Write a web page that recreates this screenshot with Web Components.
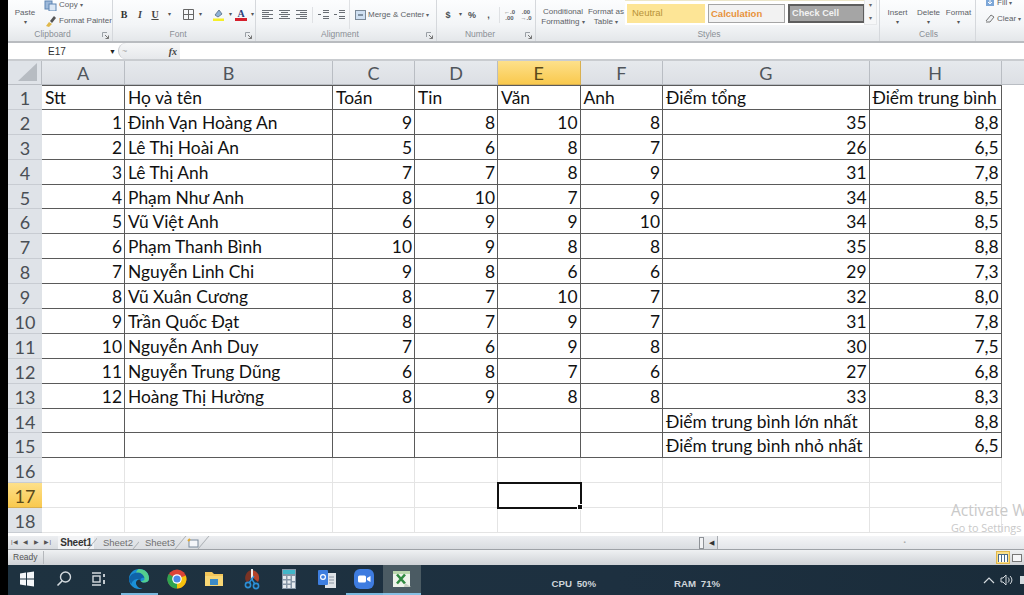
<!DOCTYPE html>
<html lang="vi">
<head>
<meta charset="utf-8">
<title>Excel</title>
<style>
  html, body { margin: 0; height: 595px; overflow: hidden; background: #000; }
  body { padding-left: 8px; box-sizing: border-box; width: 1024px; display: flex; flex-direction: column; font-family: "Liberation Sans", sans-serif; }
</style>
</head>
<body>
<xl-ribbon></xl-ribbon>
<xl-formula-bar></xl-formula-bar>
<xl-sheet></xl-sheet>
<xl-tabs></xl-tabs>
<xl-status></xl-status>
<xl-taskbar></xl-taskbar>
<script>
// small launcher mark that sits in the corner of a ribbon group
const launcher = `<svg width="7" height="7" viewBox="0 0 7 7"><path d="M0.5 0.5H5M0.5 0.5V5" stroke="#9aa0a6" fill="none"/><path d="M3 3L6.5 6.5M6.5 3.5V6.5H3.5" stroke="#777" fill="none"/></svg>`;

class RbGroup extends HTMLElement {
    constructor() {
        super();
        this.attachShadow({ mode: 'open' });
        const hasLaunch = this.hasAttribute('launch');
        const launch = hasLaunch ? `<span class="launch">${launcher}</span>` : '';
        this.shadowRoot.innerHTML = `
            <style>
                :host { display: flex; flex-direction: column; box-sizing: border-box; height: 41px; border-right: 1px solid #d5d8dc; overflow: hidden; flex: none; position: relative; }
                .body { height: 29px; display: flex; align-items: center; }
                .label { height: 12px; line-height: 11px; font-size: 8.5px; color: #8a8f96; text-align: center; padding-right: ${hasLaunch ? 15 : 0}px; }
                .launch { position: absolute; right: 3px; bottom: 2px; line-height: 0; }
            </style>
            <div class="body"><slot></slot></div>
            <div class="label">${this.getAttribute('label') || ''}${launch}</div>`;
    }
}
customElements.define('rb-group', RbGroup);

const lines = (rows) => `<svg width="11" height="9" viewBox="0 0 11 9">${rows.map((r, i) => `<path d="M${r[0]} ${i * 2 + 0.5}H${r[1]}" stroke="#6a6f75"/>`).join('')}</svg>`;

const ribbonTemplate = document.createElement('template');
ribbonTemplate.innerHTML = `
    <style>
        :host { display: flex; flex: none; height: 43px; box-sizing: border-box; border-bottom: 2px solid #b9bcc0; background: linear-gradient(#fcfdfe, #f3f5f7 60%, #e4e7ea); font-size: 8px; color: #5c6166; overflow: hidden; }
        .big { display: flex; flex-direction: column; align-items: center; text-align: center; line-height: 10px; color: #5c6166; white-space: nowrap; margin-top: 5px; flex: none; }
        .arrow { font-size: 6px; line-height: 9px; color: #555; }
        .small { display: flex; align-items: center; gap: 2px; height: 16px; white-space: nowrap; }
        .ic { display: flex; flex: none; align-items: center; justify-content: center; height: 16px; }
        .w16 { width: 16px; } .w14 { width: 14px; } .w8 { width: 8px; } .w17 { width: 17px; }
        .sp1 { width: 1px; flex: none; } .sp2 { width: 2px; flex: none; } .sp4 { width: 4px; flex: none; } .sp6 { width: 6px; flex: none; }
        .sep { width: 1px; height: 16px; background: #dfe1e4; flex: none; }
        .b { font: bold 10px "Liberation Serif", serif; color: #333; }
        .i { font: italic bold 10px "Liberation Serif", serif; color: #444; }
        .u { font: bold 10px "Liberation Serif", serif; color: #444; text-decoration: underline; }
        .num { font: bold 9px "Liberation Sans", sans-serif; color: #4a4f55; }
        .dec { flex-direction: column; font: bold 6px/6px "Liberation Sans", sans-serif; color: #5a6066; }
        .gallery { display: flex; gap: 3px; align-items: center; background: #fff; height: 25px; margin-top: -4px; padding: 0 2px; box-sizing: border-box; width: 239px; flex: none; border-top: 1px solid #ece6c8; }
        .st { width: 77px; height: 19px; flex: none; box-sizing: border-box; font-size: 9.5px; line-height: 17px; padding-left: 2px; white-space: nowrap; }
        .neutral { background: #fde596; color: #b8933a; padding-left: 5px; width: 78px; }
        .calc { background: #f2f2f2; border: 1px solid #a5a5a5; color: #e8923a; font-weight: bold; }
        .check { background: #a5a5a5; border: 2px solid #5e5e5e; color: #f2f2f2; font-weight: bold; line-height: 15px; font-size: 9.2px; }
        .gscroll { width: 13px; height: 25px; margin-top: -4px; flex: none; display: flex; flex-direction: column; justify-content: space-between; align-items: center; font-size: 6px; color: #666; line-height: 11px; border: 1px solid #e6e8ea; border-top: 0; box-sizing: border-box; background: #f6f7f8; }
    </style>
    <rb-group label="Clipboard" launch style="width:105px">
        <div class="big" style="width:34px">Paste<span class="arrow">▾</span></div>
        <div style="margin-top:-4px">
            <div class="small" style="margin-left:2px">
                <svg width="13" height="12" viewBox="0 0 13 12"><rect x="1" y="2" width="7" height="8" fill="#9db9da" stroke="#5f86b3"/><rect x="5" y="5" width="7" height="7" fill="#dbe7f4" stroke="#5f86b3"/></svg>Copy <span style="font-size:6px">▾</span>
            </div>
            <div class="small" style="margin-left:2px">
                <svg width="13" height="12" viewBox="0 0 13 12"><path d="M2 11L5 7L8 9L5 12Z" fill="#e0b84a"/><path d="M6 6L10 1L12 3L8 8Z" fill="#555"/></svg>Format Painter
            </div>
        </div>
    </rb-group>
    <rb-group label="Font" launch style="width:143px;padding-left:3px">
        <span class="ic w16 b">B</span><span class="ic w16 i">I</span><span class="ic w14 u">U</span><span class="ic w14 arrow">▾</span>
        <span class="sp4"></span>
        <span class="ic w16"><svg width="11" height="11" viewBox="0 0 11 11"><path d="M.5.5h10v10H.5zM5.5.5v10M.5 5.5h10" fill="none" stroke="#666"/></svg></span><span class="ic w8 arrow">▾</span>
        <span class="sp6"></span>
        <span class="ic w16"><svg width="13" height="13" viewBox="0 0 13 13"><path d="M3 7L7 2L10 6L6 9Z" fill="#8fb2d6" stroke="#6a7f96"/><path d="M1 10.5h11v2.5H1z" fill="#f5ef28"/></svg></span><span class="ic w8 arrow">▾</span>
        <span class="ic w14" style="flex-direction:column"><span class="b" style="line-height:9px;color:#2b3f7a">A</span><span style="width:12px;height:3px;background:#d5202c"></span></span><span class="ic w8 arrow">▾</span>
    </rb-group>
    <rb-group label="Alignment" launch style="width:181px;padding-left:3px">
        <span class="ic w17">${lines([[0, 11], [0, 7], [0, 11], [0, 7], [0, 11]])}</span><span class="ic w17">${lines([[0, 11], [2, 9], [0, 11], [2, 9], [0, 11]])}</span><span class="ic w17">${lines([[0, 11], [4, 11], [0, 11], [4, 11], [0, 11]])}</span>
        <span class="sp2"></span><span class="sep"></span><span class="sp2"></span>
        <span class="ic w16">${lines([[5, 11], [5, 11], [0, 3], [5, 11], [5, 11]])}</span><span class="ic w16">${lines([[5, 11], [5, 11], [0, 3], [5, 11], [5, 11]])}</span>
        <span class="sp2"></span><span class="sep" style="height:29px"></span>
        <span class="small" style="margin-left:5px"><svg width="11" height="10" viewBox="0 0 11 10"><rect x=".5" y=".5" width="10" height="9" fill="#cfe0f2" stroke="#7b8a99"/><path d="M3 5h5" stroke="#345"/></svg>Merge &amp; Center <span style="font-size:6px">▾</span></span>
    </rb-group>
    <rb-group label="Number" launch style="width:99px;padding-left:3px">
        <span class="ic w16 num">$</span><span class="ic w8 arrow">▾</span><span class="ic w16 num">%</span><span class="ic w17 num">,</span>
        <span class="sp2"></span><span class="sep"></span><span class="sp1"></span>
        <span class="ic w17 dec"><span>←.0</span><span>.00</span></span><span class="ic w16 dec"><span>.00</span><span>→.0</span></span>
    </rb-group>
    <rb-group label="Styles" style="width:344px;padding-left:3px">
        <div class="big" style="width:48px">Conditional<span>Formatting <span style="font-size:6px">▾</span></span></div>
        <div class="big" style="width:38px">Format as<span>Table <span style="font-size:6px">▾</span></span></div>
        <div class="gallery">
            <div class="st neutral">Neutral</div>
            <div class="st calc">Calculation</div>
            <div class="st check">Check Cell</div>
        </div>
        <div class="gscroll"><span>▾</span><span>▾</span></div>
    </rb-group>
    <rb-group label="Cells" style="width:96px;padding-left:2px">
        <div class="big" style="width:31px">Insert<span class="arrow">▾</span></div>
        <div class="big" style="width:31px">Delete<span class="arrow">▾</span></div>
        <div class="big" style="width:29px">Format<span class="arrow">▾</span></div>
    </rb-group>
    <rb-group style="width:48px;padding-left:9px;border:0">
        <div style="margin-top:-9px">
            <div class="small"><svg width="10" height="10" viewBox="0 0 10 10"><rect x="1" y="1" width="8" height="8" fill="#7da7d8"/><path d="M5 2v5M3 5l2 2 2-2" stroke="#fff" fill="none"/></svg>Fill <span style="font-size:6px">▾</span></div>
            <div class="small"><svg width="10" height="10" viewBox="0 0 10 10"><path d="M1 8L6 2L9 4L5 9H1" fill="#eef1f4" stroke="#777"/></svg>Clear <span style="font-size:6px">▾</span></div>
        </div>
    </rb-group>
`;
class XlRibbon extends HTMLElement {
    constructor() {
        super();
        this.attachShadow({ mode: 'open' });
        this.shadowRoot.appendChild(ribbonTemplate.content.cloneNode(true));
    }
}
customElements.define('xl-ribbon', XlRibbon);

class XlFormulaBar extends HTMLElement {
    constructor() {
        super();
        this.attachShadow({ mode: 'open' });
        this.shadowRoot.innerHTML = `
            <style>
                :host { display: flex; flex: none; height: 18px; box-sizing: border-box; background: #fff; border-bottom: 2px solid #c9ccd0; font-size: 10px; color: #333; align-items: center; }
                .name { width: 110px; flex: none; display: flex; align-items: center; justify-content: space-between; box-sizing: border-box; padding: 0 2px 0 40px; }
                .arrow { font-size: 7px; color: #222; }
                .btn { width: 62px; flex: none; height: 16px; box-sizing: border-box; background: linear-gradient(#f6f7f8, #e6e8eb); border-radius: 8px 0 0 8px; border-left: 1px solid #c4c7cb; display: flex; align-items: center; justify-content: space-between; padding: 0 3px 0 3px; color: #aaa; font-size: 9px; }
                .fx { font: italic bold 10px "Liberation Serif", serif; color: #444; }
            </style>
            <div class="name"><span>E17</span><span class="arrow">▼</span></div>
            <div class="btn"><span>~</span><span class="fx">fx</span></div>`;
    }
}
customElements.define('xl-formula-bar', XlFormulaBar);

const sheetRows = [
    ['Stt', 'Họ và tên', 'Toán', 'Tin', 'Văn', 'Anh', 'Điểm tổng', 'Điểm trung bình'],
    [1, 'Đinh Vạn Hoàng An', 9, 8, 10, 8, 35, '8,8'],
    [2, 'Lê Thị Hoài An', 5, 6, 8, 7, 26, '6,5'],
    [3, 'Lê Thị Anh', 7, 7, 8, 9, 31, '7,8'],
    [4, 'Phạm Như Anh', 8, 10, 7, 9, 34, '8,5'],
    [5, 'Vũ Việt Anh', 6, 9, 9, 10, 34, '8,5'],
    [6, 'Phạm Thanh Bình', 10, 9, 8, 8, 35, '8,8'],
    [7, 'Nguyễn Linh Chi', 9, 8, 6, 6, 29, '7,3'],
    [8, 'Vũ Xuân Cương', 8, 7, 10, 7, 32, '8,0'],
    [9, 'Trần Quốc Đạt', 8, 7, 9, 7, 31, '7,8'],
    [10, 'Nguyễn Anh Duy', 7, 6, 9, 8, 30, '7,5'],
    [11, 'Nguyễn Trung Dũng', 6, 8, 7, 6, 27, '6,8'],
    [12, 'Hoàng Thị Hường', 8, 9, 8, 8, 33, '8,3'],
    ['', '', '', '', '', '', 'Điểm trung bình lớn nhất', '8,8'],
    ['', '', '', '', '', '', 'Điểm trung bình nhỏ nhất', '6,5'],
    ['', '', '', '', '', '', '', ''],
    ['', '', '', '', '', '', '', ''],
    ['', '', '', '', '', '', '', ''],
];

class XlSheet extends HTMLElement {
    constructor() {
        super();
        this.attachShadow({ mode: 'open' });
        this.shadowRoot.innerHTML = `
            <style>
                :host { display: block; flex: none; height: 475px; background: #fff; position: relative; overflow: hidden; }
                .grid { display: grid; grid-template-columns: 34px 83px 208px 82px 83px 82.5px 82.5px 206.5px 132px 23px; grid-template-rows: 24px repeat(18, 24.9px); font: 17.4px/24px Lato, sans-serif; color: #111; }
                .hd { background: linear-gradient(#e6e9ed, #dcdfe4); color: #4a4f55; text-align: center; border-right: 1px solid #b9bdc3; border-bottom: 1px solid #b9bdc3; box-sizing: border-box; font-size: 18px; }
                .hd.col { color: #50555b; }
                .hd.row { border-right: 0; background: #dfe3e8; border-bottom-color: #c8ccd2; padding-top: 1px; line-height: 24px; overflow: hidden; }
                .hd.on { background: linear-gradient(#fde08a, #f9c94e); color: #5a4a1a; border-color: #d9b050; }
                .corner { background: #dfe3e8; border-right: 1px solid #b9bdc3; border-bottom: 1px solid #b9bdc3; display: flex; align-items: flex-end; justify-content: flex-end; padding: 0 4px 3px 0; box-sizing: border-box; }
                .c { box-sizing: border-box; border-right: 1px solid #e4e4e4; border-bottom: 1px solid #e4e4e4; padding: 1px 2px 0 3px; white-space: nowrap; overflow: hidden; line-height: 24px; }
                .c.line { border-color: #5a5a5a; }
                .c.top { border-top: 1px solid #5a5a5a; padding-top: 0; }
                .c.n { text-align: right; }
                .c.sel { outline: 2px solid #111; outline-offset: -1px; position: relative; overflow: visible; z-index: 2; }
                .c.sel::after { content: ""; position: absolute; right: -3px; bottom: -3px; width: 4px; height: 4px; background: #111; border: 1px solid #fff; }
                .wm { position: absolute; left: 943px; color: #c9c9c9; white-space: nowrap; }
                .wm.a { top: 440px; font: 15.5px/18px "Open Sans", sans-serif; }
                .wm.b { top: 460px; font: 10.8px/14px "Open Sans", sans-serif; }
            </style>
            <div class="grid"></div>
            <div class="wm a">Activate Windows</div>
            <div class="wm b">Go to Settings to activate Windows.</div>`;
        this._render();
    }

    _render() {
        const grid = this.shadowRoot.querySelector('.grid');
        const corner = document.createElement('div');
        corner.className = 'corner';
        corner.innerHTML = '<svg width="19" height="18" viewBox="0 0 19 18"><path d="M19 0V18H0Z" fill="#b7bcc2"/></svg>';
        grid.appendChild(corner);
        'ABCDEFGH'.split('').concat('').forEach((name) => {
            const el = document.createElement('div');
            el.className = 'hd col' + (name === 'E' ? ' on' : '');
            el.textContent = name;
            grid.appendChild(el);
        });
        sheetRows.forEach((cells, r) => {
            const head = document.createElement('div');
            head.className = 'hd row' + (r === 16 ? ' on' : '');
            head.textContent = r + 1;
            grid.appendChild(head);
            cells.concat(['']).forEach((value, c) => {
                const el = document.createElement('div');
                el.className = 'c';
                el.textContent = value;
                if (r < 15 && c < 8) el.classList.add('line');
                if (r === 0 && c < 8) el.classList.add('top');
                const isLabel = c === 1 || (c === 6 && r > 12);
                if (r > 0 && !isLabel) el.classList.add('n');
                if (r === 16 && c === 4) el.classList.add('sel');
                if (c === 8) el.style.border = '0';
                grid.appendChild(el);
            });
        });
    }
}
customElements.define('xl-sheet', XlSheet);

class XlTabs extends HTMLElement {
    constructor() {
        super();
        this.attachShadow({ mode: 'open' });
        this.shadowRoot.innerHTML = `
            <style>
                :host { display: flex; flex: none; align-items: stretch; height: 14px; box-sizing: border-box; background: linear-gradient(#eceef1, #d9dce0); border-bottom: 1px solid #9ea2a7; font-size: 9.5px; line-height: 13px; color: #707070; }
                .nav { display: flex; width: 47px; flex: none; padding-left: 3px; box-sizing: border-box; align-items: center; justify-content: space-between; padding-right: 4px; font-size: 6px; color: #555; }
                .tab { flex: none; text-align: center; box-sizing: border-box; position: relative; }
                .tab::after { content: ""; position: absolute; right: 0; top: 0; bottom: 0; border-right: 1px solid #a9adb2; transform: skewX(-40deg); }
                .on { width: 36px; background: #f3f4f6; color: #333; font-weight: bold; font-size: 10px; letter-spacing: -.2px; margin-left: 3px; }
                .other { width: 42px; background: linear-gradient(#e6e8eb, #dcdfe3); }
                .add { width: 22px; margin-left: 1px; display: flex; align-items: center; justify-content: center; }
                .fill { flex: 1; }
                .split { width: 5px; height: 12px; align-self: center; border: 1px solid #8e9297; box-sizing: border-box; background: #f2f3f5; flex: none; margin-right: 1px; }
                .left { width: 12px; flex: none; text-align: center; font-size: 7px; color: #333; }
                .track { width: 307px; flex: none; background: linear-gradient(#f4f5f7, #e3e5e9); border-left: 1px solid #a8acb1; text-align: center; font-size: 6px; color: #aaa; padding-left: 67px; box-sizing: border-box; }
            </style>
            <div class="nav"><span>|◀</span><span>◀</span><span>▶</span><span>▶|</span></div>
            <div class="tab on">Sheet1</div>
            <div class="tab other" style="margin-left:3px">Sheet2</div>
            <div class="tab other">Sheet3</div>
            <div class="tab add"><svg width="12" height="10" viewBox="0 0 12 10"><rect x="2" y="2" width="9" height="7" fill="#f4f6fa" stroke="#7a8a9c"/><path d="M1 3L3 1" stroke="#e0a830" stroke-width="2"/></svg></div>
            <div class="fill"></div>
            <div class="split"></div>
            <div class="left">◀</div>
            <div class="track">▪</div>`;
    }
}
customElements.define('xl-tabs', XlTabs);

class XlStatus extends HTMLElement {
    constructor() {
        super();
        this.attachShadow({ mode: 'open' });
        this.shadowRoot.innerHTML = `
            <style>
                :host { display: flex; flex: none; align-items: center; height: 15px; background: linear-gradient(#eff1f3, #cfd2d6); font-size: 8.5px; color: #555; }
                .ready { padding: 0 5px; border-right: 1px solid #b5b8bc; line-height: 13px; }
                .fill { flex: 1; }
                .view { width: 14px; height: 13px; flex: none; box-sizing: border-box; display: flex; align-items: center; justify-content: center; }
                .view.on { background: #fbe08a; border: 1px solid #e2b84c; }
            </style>
            <span class="ready">Ready</span>
            <span class="fill"></span>
            <span class="view on"><svg width="10" height="8" viewBox="0 0 10 8"><path d="M0 0h10v8H0z" fill="#fff"/><path d="M0 .5h10M.5 0v8M3.5 0v8M6.5 0v8M9.5 0v8" stroke="#4a6a8a"/></svg></span>
            <span class="view"><svg width="10" height="8" viewBox="0 0 10 8"><rect x=".5" y=".5" width="9" height="7" fill="#f5f6f8" stroke="#777"/></svg></span>`;
    }
}
customElements.define('xl-status', XlStatus);

const taskIcons = [
    `<svg width="18" height="18" viewBox="0 0 18 18"><path d="M2 3.5L8 2.6V8.4H2ZM9 2.5L16 1.5V8.4H9ZM2 9.4H8V15.4L2 14.5ZM9 9.4H16V16.5L9 15.5Z" fill="#f4f6f8"/></svg>`,
    `<svg width="18" height="18" viewBox="0 0 18 18"><circle cx="10.5" cy="7" r="5" fill="none" stroke="#d4dade" stroke-width="1.4"/><path d="M7 11L2.5 15.5" stroke="#d4dade" stroke-width="1.6"/></svg>`,
    `<svg width="20" height="18" viewBox="0 0 20 18" style="margin-left:-6px"><path d="M3 3H12M3 15H12" stroke="#d4dade" stroke-width="1.4"/><rect x="4" y="6" width="7" height="6" fill="none" stroke="#d4dade" stroke-width="1.4"/><path d="M15 4V7M15 10V14" stroke="#d4dade" stroke-width="1.8"/></svg>`,
    `<svg width="22" height="22" viewBox="0 0 22 22"><path d="M1 11C1 5 6 1 11 1C17 1 21 5 21 10.5C21 13 19 14.5 16 14.5C13 14.5 12 13 12.5 11.5C9 11 7 14 8.5 17C9.5 19.5 12 20.5 14.5 20.5C12 21.5 9 21.2 6.5 20C3 18 1 15 1 11Z" fill="#1b8fd6"/><path d="M1 11C2 6 7 4 11 4.5C15 5 18 8 16.5 10C15 9.5 13 10 12.5 11.5C8 10 4 12.5 3.5 16C2 14.5 1 13 1 11Z" fill="#0f63a8"/><path d="M11 1C17 1 21 5 21 10.5C21 13 19 14.5 16 14.5C15 14.5 13.6 14 13 13C15 13.5 17 12 16.5 10C15.5 6 12 4 8 4.5C9 2 10 1.2 11 1Z" fill="#53cf8e"/></svg>`,
    `<svg width="20" height="20" viewBox="0 0 20 20"><circle cx="10" cy="10" r="9.5" fill="#dc4437"/><path d="M10 10L18.8 6.5A9.5 9.5 0 0 1 10 19.5Z" fill="#f4c20d"/><path d="M10 10L10 19.5A9.5 9.5 0 0 1 1.7 5Z" fill="#2fa450"/><circle cx="10" cy="10" r="4.8" fill="#fff"/><circle cx="10" cy="10" r="3.6" fill="#4a89e8"/></svg>`,
    `<svg width="20" height="18" viewBox="0 0 20 18"><path d="M1 2H8L10 4H19V16H1Z" fill="#f3c65a"/><path d="M1 6H19V16H1Z" fill="#f8d775"/><rect x="6" y="9" width="8" height="6" fill="#3b8bc7"/></svg>`,
    `<svg width="18" height="22" viewBox="0 0 18 22"><path d="M9 2A8 8 0 0 1 15 14L9 9Z" fill="#b5432a"/><path d="M9 2A8 8 0 0 0 4 15L9 9Z" fill="#7a3324"/><path d="M9 1V12" stroke="#eee" stroke-width="2"/><circle cx="5" cy="17" r="2.6" fill="none" stroke="#2c8fd6" stroke-width="1.6"/><circle cx="13" cy="18" r="2.6" fill="none" stroke="#2c8fd6" stroke-width="1.6"/><path d="M6 15L11 8M12 16L8 10" stroke="#2c8fd6" stroke-width="1.4"/></svg>`,
    `<svg width="14" height="20" viewBox="0 0 14 20"><rect width="14" height="20" fill="#8696a6"/><rect x="1" y="1" width="12" height="4" fill="#41b6c8"/><path d="M1 7h3v3H1zM5.5 7h3v3h-3zM10 7h3v5h-3zM1 11.5h3v3H1zM5.5 11.5h3v3h-3zM1 16h3v3H1zM5.5 16h3v3h-3zM10 13.5h3v5.5h-3z" fill="#e6ebef"/></svg>`,
    `<svg width="20" height="20" viewBox="0 0 20 20"><rect x="8" y="4" width="11" height="15" fill="#dfe3e7"/><path d="M12 8h5M12 11h5M12 14h5" stroke="#8a95a2"/><rect x="1" y="1" width="10" height="15" rx="1" fill="#3e7fe0"/><circle cx="6" cy="8" r="2.4" fill="none" stroke="#fff" stroke-width="1.2"/></svg>`,
    `<svg width="20" height="20" viewBox="0 0 20 20"><rect width="20" height="20" rx="6" fill="#3e7ce0"/><rect x="4" y="6.5" width="8" height="7" rx="1.5" fill="#fff"/><path d="M13 9L16.5 7V13L13 11Z" fill="#fff"/></svg>`,
    `<svg width="20" height="18" viewBox="0 0 20 18"><rect x="1" y="1" width="17" height="16" fill="#eef3ea"/><rect x="1" y="1" width="17" height="3" fill="#bcd8ae"/><path d="M5 4.5L13 13.5M13 4.5L5 13.5" stroke="#2f8a3f" stroke-width="2.6"/><path d="M13 13L19 17H12Z" fill="#c8cfc4"/></svg>`,
];

class XlTaskbar extends HTMLElement {
    constructor() {
        super();
        this.attachShadow({ mode: 'open' });
        this.shadowRoot.innerHTML = `
            <style>
                :host { display: flex; flex: 1; align-items: stretch; background: linear-gradient(90deg, #1e3240, #1d3040 60%, #1a2c3a); color: #d9dee2; font-family: "Liberation Sans", sans-serif; overflow: hidden; min-height: 0; }
                .b { width: 37.5px; flex: none; display: flex; align-items: center; justify-content: center; box-sizing: border-box; border-bottom: 2px solid transparent; }
                .run { border-bottom-color: #79b8de; }
                .act { background: #4b5b63; border-bottom-color: #86c0e4; }
                .stat { font-size: 9.7px; font-weight: bold; color: #cfd5da; word-spacing: 2px; white-space: nowrap; align-self: center; margin-top: 6px; }
                .tray { margin-left: auto; display: flex; gap: 5px; align-items: center; padding-right: 0; margin-right: -5px; }
            </style>
            ${taskIcons.map((icon, i) => `<div class="b${i === 3 || i === 9 ? ' run' : ''}${i === 10 ? ' act' : ''}">${icon}</div>`).join('')}
            <span class="stat" style="margin-left:131px">CPU 50%</span>
            <span class="stat" style="margin-left:78px">RAM 71%</span>
            <div class="tray">
                <svg width="12" height="8" viewBox="0 0 12 8"><path d="M1 7L6 2L11 7" fill="none" stroke="#d4dade" stroke-width="1.2"/></svg>
                <svg width="14" height="12" viewBox="0 0 14 12"><path d="M1 4H3L6 1V11L3 8H1Z M8 3.5C9.5 5 9.5 7 8 8.5M10 2C12.5 4.5 12.5 7.5 10 10" fill="none" stroke="#d4dade"/></svg>
                <svg width="10" height="12" viewBox="0 0 10 12"><rect x="1" y="2" width="9" height="8" fill="#d4dade"/></svg>
            </div>`;
    }
}
customElements.define('xl-taskbar', XlTaskbar);
</script>
</body>
</html>
